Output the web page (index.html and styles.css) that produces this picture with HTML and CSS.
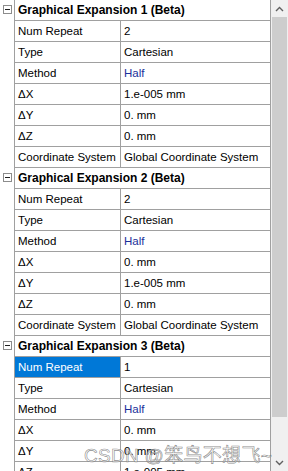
FILE: index.html
```html
<!DOCTYPE html>
<html>
<head>
<meta charset="utf-8">
<link rel="stylesheet" href="styles.css">
</head>
<body>
<div class="panel">
  <div class="grid">
    <div class="group">
      <div class="row header"><div class="gut"><span class="toggle"></span></div><div class="cell title">Graphical Expansion 1 (Beta)</div></div>
      <div class="row"><div class="gut"></div><div class="cell name">Num Repeat</div><div class="cell val">2</div></div>
      <div class="row"><div class="gut"></div><div class="cell name">Type</div><div class="cell val">Cartesian</div></div>
      <div class="row"><div class="gut"></div><div class="cell name">Method</div><div class="cell val blue">Half</div></div>
      <div class="row"><div class="gut"></div><div class="cell name">ΔX</div><div class="cell val">1.e-005 mm</div></div>
      <div class="row"><div class="gut"></div><div class="cell name">ΔY</div><div class="cell val">0. mm</div></div>
      <div class="row"><div class="gut"></div><div class="cell name">ΔZ</div><div class="cell val">0. mm</div></div>
      <div class="row"><div class="gut"></div><div class="cell name">Coordinate System</div><div class="cell val">Global Coordinate System</div></div>
    </div>
    <div class="group">
      <div class="row header"><div class="gut"><span class="toggle"></span></div><div class="cell title">Graphical Expansion 2 (Beta)</div></div>
      <div class="row"><div class="gut"></div><div class="cell name">Num Repeat</div><div class="cell val">2</div></div>
      <div class="row"><div class="gut"></div><div class="cell name">Type</div><div class="cell val">Cartesian</div></div>
      <div class="row"><div class="gut"></div><div class="cell name">Method</div><div class="cell val blue">Half</div></div>
      <div class="row"><div class="gut"></div><div class="cell name">ΔX</div><div class="cell val">0. mm</div></div>
      <div class="row"><div class="gut"></div><div class="cell name">ΔY</div><div class="cell val">1.e-005 mm</div></div>
      <div class="row"><div class="gut"></div><div class="cell name">ΔZ</div><div class="cell val">0. mm</div></div>
      <div class="row"><div class="gut"></div><div class="cell name">Coordinate System</div><div class="cell val">Global Coordinate System</div></div>
    </div>
    <div class="group">
      <div class="row header"><div class="gut"><span class="toggle"></span></div><div class="cell title">Graphical Expansion 3 (Beta)</div></div>
      <div class="row"><div class="gut"></div><div class="cell name selected">Num Repeat</div><div class="cell val">1</div></div>
      <div class="row"><div class="gut"></div><div class="cell name">Type</div><div class="cell val">Cartesian</div></div>
      <div class="row"><div class="gut"></div><div class="cell name">Method</div><div class="cell val blue">Half</div></div>
      <div class="row"><div class="gut"></div><div class="cell name">ΔX</div><div class="cell val">0. mm</div></div>
      <div class="row"><div class="gut"></div><div class="cell name">ΔY</div><div class="cell val">0. mm</div></div>
      <div class="row"><div class="gut"></div><div class="cell name">ΔZ</div><div class="cell val">1.e-005 mm</div></div>
    </div>
  </div>
  <div class="scrollbar">
    <div class="arrow"><svg width="9" height="6" viewBox="0 0 9 6"><path d="M1 5 L4.5 1.5 L8 5" fill="none" stroke="#606060" stroke-width="1.4"/></svg></div>
    <div class="track"><div class="thumb"></div></div>
    <div class="arrow"><svg width="9" height="6" viewBox="0 0 9 6"><path d="M1 1 L4.5 4.5 L8 1" fill="none" stroke="#606060" stroke-width="1.4"/></svg></div>
  </div>
  <div class="watermark">CSDN @笨鸟不想飞~</div>
</div>
</body>
</html>
```
FILE: styles.css
```css
html, body {
  margin: 0;
  padding: 0;
  background: #fff;
}
body {
  font-family: "Liberation Sans", Arial, sans-serif;
  font-size: 11.5px;
  color: #000;
  overflow: hidden;
}
.panel {
  position: relative;
  display: flex;
  width: 288px;
  height: 471px;
  overflow: hidden;
}
.grid {
  width: 271px;
  flex: none;
  height: 471px;
  overflow: hidden;
}
.row {
  display: flex;
  height: 21px;
}
.gut {
  width: 15px;
  flex: none;
  box-sizing: border-box;
  border-right: 1px solid #a0a0a0;
  position: relative;
}
.toggle {
  position: absolute;
  left: 3px;
  top: 5px;
  width: 9px;
  height: 9px;
  box-sizing: border-box;
  border: 1px solid #8c8c8c;
  background: #fff;
}
.toggle::after {
  content: "";
  position: absolute;
  left: 1px;
  top: 3px;
  width: 5px;
  height: 1px;
  background: #202020;
}
.cell {
  box-sizing: border-box;
  height: 21px;
  border-right: 1px solid #a0a0a0;
  border-bottom: 1px solid #a0a0a0;
  padding: 0 0 0 3px;
  line-height: 20px;
  white-space: nowrap;
  overflow: hidden;
}
.name {
  width: 106px;
  flex: none;
}
.val {
  width: 150px;
  flex: none;
}
.title {
  width: 256px;
  flex: none;
  font-weight: bold;
  font-size: 12px;
}
.blue {
  color: #1a2f9a;
}
.selected {
  background: #0078d7;
  color: #fff;
}
.scrollbar {
  width: 17px;
  flex: none;
  height: 471px;
  background: #f0f0f0;
  display: flex;
  flex-direction: column;
}
.arrow {
  height: 17px;
  flex: none;
  display: flex;
  align-items: center;
  justify-content: center;
}
.track {
  flex: 1;
  padding: 0 1px;
}
.thumb {
  height: 400px;
  background: #cdcdcd;
}
.watermark {
  position: absolute;
  left: 84px;
  top: 440px;
  font-family: "Liberation Sans", "Noto Sans CJK SC", sans-serif;
  font-size: 19px;
  color: rgba(255, 255, 255, 0.55);
  -webkit-text-stroke: 0.6px rgba(110, 110, 110, 0.8);
  white-space: nowrap;
  letter-spacing: 0.3px;
}
```
